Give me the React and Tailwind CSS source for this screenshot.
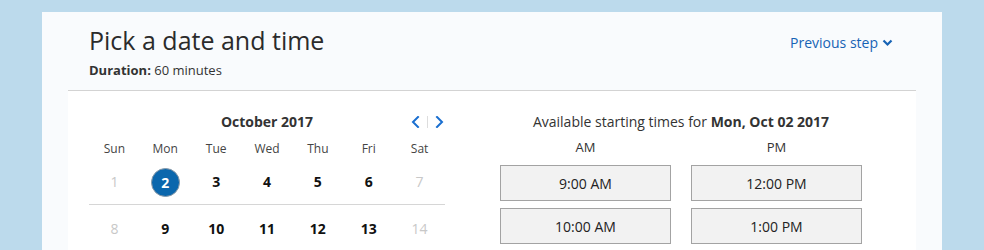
import React from 'react';

const days = [
  [
    { n: 1, muted: true },
    { n: 2, selected: true },
    { n: 3 },
    { n: 4 },
    { n: 5 },
    { n: 6 },
    { n: 7, muted: true },
  ],
  [
    { n: 8, muted: true },
    { n: 9 },
    { n: 10 },
    { n: 11 },
    { n: 12 },
    { n: 13 },
    { n: 14, muted: true },
  ],
];

const weekdays = ['Sun', 'Mon', 'Tue', 'Wed', 'Thu', 'Fri', 'Sat'];

function Chevron({ dir }) {
  const d = dir === 'left' ? 'M7 1 L2 6 L7 11' : 'M2 1 L7 6 L2 11';
  return (
    <svg width="9" height="12" viewBox="0 0 9 12" fill="none">
      <path d={d} stroke="#1a6fd0" strokeWidth="2" strokeLinecap="square" />
    </svg>
  );
}

function Calendar() {
  return (
    <div className="w-[356px] ml-[21px] pt-[20px]">
      <div className="grid grid-cols-[1fr_auto_1fr] items-center h-[20px]">
        <div />
        <div className="text-[14px] font-bold text-[#333]">October 2017</div>
        <div className="flex items-center justify-end gap-[7px] pr-[1px]">
          <Chevron dir="left" />
          <span className="w-px h-[12px] bg-[#ddd]" />
          <Chevron dir="right" />
        </div>
      </div>
      <div className="grid grid-cols-7 mt-[9px] h-[18px] items-center text-[12px] text-[#444]">
        {weekdays.map((w) => (
          <div key={w} className="text-center">{w}</div>
        ))}
      </div>
      {days.map((row, i) => (
        <div
          key={i}
          className={`grid grid-cols-7 items-center h-[47px] ${
            i === 0 ? 'border-b border-[#d6d6d6]' : ''
          }`}
        >
          {row.map((d) => (
            <div key={d.n} className="flex justify-center">
              {d.selected ? (
                <span className="w-[29px] h-[29px] mt-[2px] rounded-full bg-[#0b67ad] border border-[#8a9aa8] text-white text-[14px] font-bold flex items-center justify-center">
                  {d.n}
                </span>
              ) : (
                <span
                  className={`text-[14px] ${
                    d.muted ? 'text-[#c8c8c8]' : 'font-bold text-[#111]'
                  }`}
                >
                  {d.n}
                </span>
              )}
            </div>
          ))}
        </div>
      ))}
    </div>
  );
}

function TimeSlots() {
  const am = ['9:00 AM', '10:00 AM'];
  const pm = ['12:00 PM', '1:00 PM'];
  return (
    <div className="w-[362px] ml-[55px] pt-[20px]">
      <div className="h-[20px] flex items-center justify-center text-[14px] text-[#333]">
        Available starting times for&nbsp;<span className="font-bold">Mon, Oct 02 2017</span>
      </div>
      <div className="grid grid-cols-2 gap-x-[20px] mt-[8px]">
        {[['AM', am], ['PM', pm]].map(([label, list]) => (
          <div key={label}>
            <div className="h-[18px] flex items-center justify-center text-[13px] text-[#333]">
              {label}
            </div>
            <div className="flex flex-col gap-[7px] mt-[8px]">
              {list.map((t) => (
                <button
                  key={t}
                  className="h-[36px] w-full bg-[#f2f2f2] border border-[#a3a3a3] text-[14px] text-[#222]"
                >
                  {t}
                </button>
              ))}
            </div>
          </div>
        ))}
      </div>
    </div>
  );
}

export default function App() {
  return (
    <div
      className="h-[250px] overflow-hidden bg-[#bcdaec] pl-[42px] pt-[12px]"
      style={{ fontFamily: '"Open Sans", sans-serif' }}
    >
      <div className="w-[900px] h-[238px] bg-[#f9fbfd]">
        <div className="flex justify-between items-start h-[78px] pl-[47px] pr-[49px]">
          <div className="pt-[12px]">
            <h1 className="text-[25px] leading-[32px] text-[#2b2b2b]">Pick a date and time</h1>
            <p className="mt-[5px] text-[13px] leading-[18px] text-[#333]">
              <span className="font-bold">Duration:</span> 60 minutes
            </p>
          </div>
          <button className="mt-[21px] flex items-center gap-[4px] text-[14px] leading-[20px] text-[#1763b5]">
            Previous step
            <svg width="11" height="8" viewBox="0 0 11 8" fill="none">
              <path d="M1.5 1.5 L5.5 5.5 L9.5 1.5" stroke="#1763b5" strokeWidth="2.2" />
            </svg>
          </button>
        </div>
        <div className="mx-[26px] h-[160px] bg-white border-t border-[#d3d3d3] flex">
          <Calendar />
          <TimeSlots />
        </div>
      </div>
    </div>
  );
}
